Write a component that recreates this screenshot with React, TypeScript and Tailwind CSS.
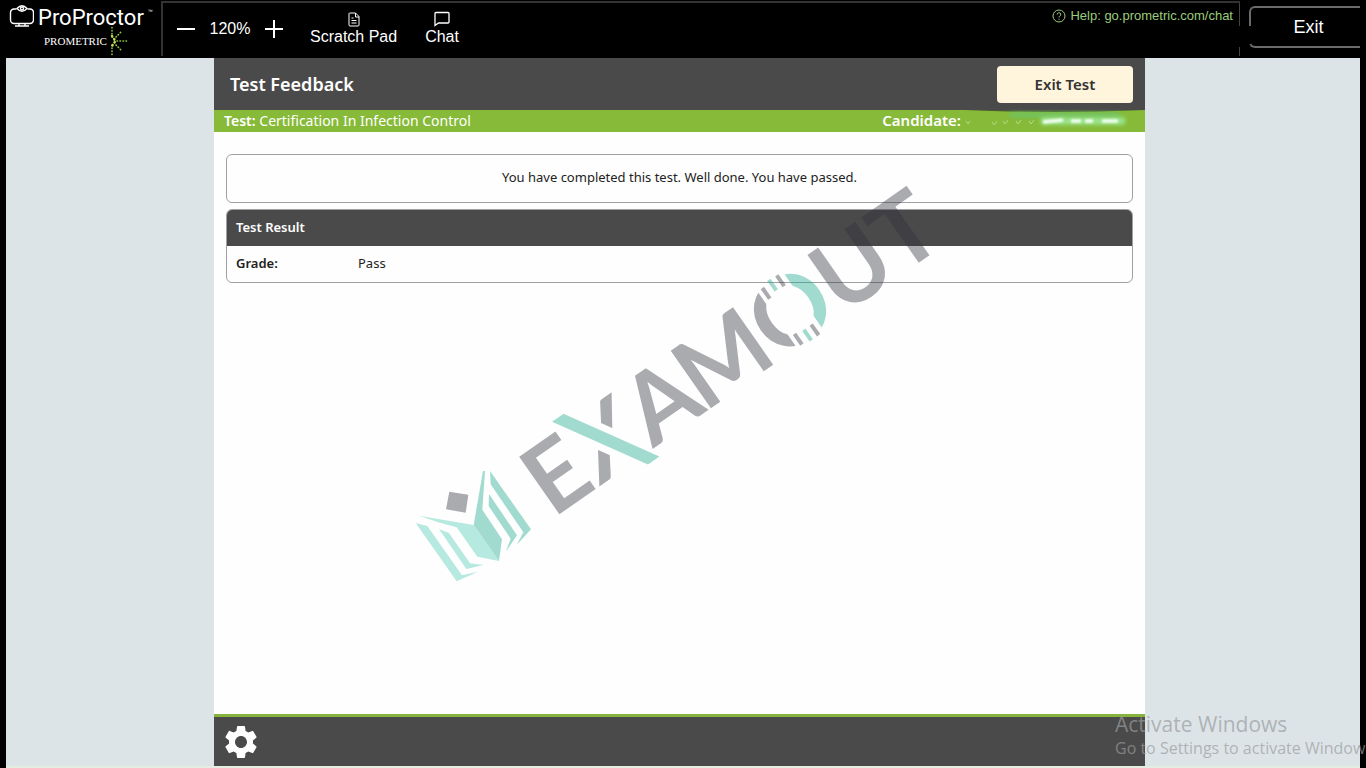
import React from "react";
import { MdSettings } from "react-icons/md";

const SANS = "font-['Noto_Sans','Open_Sans',sans-serif]";

function MonitorLogo() {
  return (
    <svg viewBox="0 0 26 24" className="h-6 w-[26px]" fill="none" stroke="white" strokeWidth="1.4">
      <path d="M8.500 5H6a3.500 3.500 0 0 0-3.500 3.500V16A3.500 3.500 0 0 0 6 19.500h16a3.500 3.500 0 0 0 3.500-3.500V8.500A3.500 3.500 0 0 0 22 5h-2.500" />
      <path d="M9 4.500Q14-1 19 4.500Q14 10 9 4.500z" />
      <circle cx="14" cy="4.500" r="1.500" />
      <path d="M7 22h14M11 19.500v2M17 19.500v2" />
    </svg>
  );
}

function Burst() {
  return (
    <svg viewBox="0 0 20 30" className="h-[30px] w-5" fill="none" stroke="#8ec63f" strokeLinecap="round">
      <g strokeWidth="1.600" strokeDasharray="0.5 2.500">
        <path d="M3 11V1M3 19v10M8 15h10M7 11l5-5M7 19l5 5" />
      </g>
      <g stroke="#c5e04e" strokeWidth="2.400" strokeDasharray="0.5 3.200">
        <path d="M3 10l3.500 5L3 20" />
      </g>
    </svg>
  );
}

function Toolbar() {
  return (
    <header className="flex h-[58px] shrink-0 bg-black pr-1.5 pl-2 font-['Liberation_Sans',Arial,sans-serif] text-white">
      <div className="w-[153px] shrink-0 pt-1">
        <div className="flex items-start gap-1">
          <MonitorLogo />
          <span className="font-['Roboto',sans-serif] text-[22px] leading-7">ProProctor</span>
          <span className="pt-1 text-[5px]">™</span>
        </div>
        <div className="-mt-1 flex h-[26px] items-center gap-0.5 pl-9">
          <span className="font-['Liberation_Serif',serif] text-[11px]">PROMETRIC</span>
          <Burst />
        </div>
      </div>

      <div className="mt-px mb-0.5 flex flex-1 justify-between border-t-2 border-l-2 border-[#333]">
        <div className="flex items-center pb-px pl-[13px]">
          <button aria-label="Zoom out" className="flex size-5 items-center justify-center">
            <svg viewBox="0 0 20 20" className="size-5" stroke="white" strokeWidth="2">
              <path d="M1 10h18" />
            </svg>
          </button>
          <span className="w-[68px] text-center text-base">120%</span>
          <button aria-label="Zoom in" className="flex size-5 items-center justify-center">
            <svg viewBox="0 0 20 20" className="size-5" stroke="white" strokeWidth="2">
              <path d="M1 10h18M10 1v18" />
            </svg>
          </button>
          <button className="ml-[26px] flex flex-col items-center text-base leading-5">
            <svg viewBox="0 0 12 15" className="h-[15px] w-3" fill="none" stroke="white" strokeWidth="1">
              <path d="M1.500 1h6L11 4.500V13a1 1 0 0 1-1 1H2a1 1 0 0 1-1-1V1.500zM7.500 1v4H11M3.500 6h2M3.500 8.500h5M3.500 11h5" />
            </svg>
            Scratch Pad
          </button>
          <button className="ml-7 flex flex-col items-center text-base leading-5">
            <svg viewBox="0 0 16 16" className="size-4" fill="none" stroke="white" strokeWidth="1.300">
              <path d="M2 1.500h12a1 1 0 0 1 1 1v8.500a1 1 0 0 1-1 1H4.500l-3.500 2.500V2.500a1 1 0 0 1 1-1z" />
            </svg>
            Chat
          </button>
        </div>

        <div className="flex flex-col items-end justify-between">
          <div className="flex h-[23px] items-center gap-1 border-r border-[#444] pt-0.5 pr-1.5 text-[#9ccc7c]">
            <svg viewBox="0 0 14 14" className="size-[14px]" fill="none" stroke="currentColor">
              <circle cx="7" cy="7" r="6" />
              <path d="M5.200 5.500a1.800 1.800 0 1 1 2.600 1.600c-.6.300-.8.600-.8 1.400M7 9.700v1" />
            </svg>
            <a href="#help" className="text-[13px]">
              Help: go.prometric.com/chat
            </a>
          </div>
          <span className="h-[9px] border-r border-[#444]" />
        </div>
      </div>

      <button className="relative mt-1.5 ml-[9px] h-[42px] w-[111px] rounded-l-md border-y-2 border-l-2 border-[#6b6b6b] pl-1.5 text-lg">
        <span className="absolute top-[18px] -left-0.5 h-[18px] w-0.5 bg-black" />
        Exit
      </button>
    </header>
  );
}

function Smudge() {
  return (
    <svg viewBox="0 0 180 24" className="h-6 w-[180px]" fill="none" aria-hidden="true">
      <defs>
        <filter id="soft" filterUnits="userSpaceOnUse" x="0" y="-5" width="180" height="34">
          <feGaussianBlur stdDeviation="2" />
        </filter>
        <filter id="softer" filterUnits="userSpaceOnUse" x="0" y="-5" width="180" height="34">
          <feGaussianBlur stdDeviation="0.9" />
        </filter>
      </defs>
      <path d="M0 1Q90 5 180 1z" fill="#4a5a38" />
      <path d="M45 6h110" stroke="#6cc46c" strokeWidth="4" filter="url(#soft)" />
      <path d="M76 12h84" stroke="#9be893" strokeWidth="7" filter="url(#soft)" />
      <path d="M78 13l20-2M106 12h10M120 12h8M137 12h16" stroke="#f4fff5" strokeWidth="3.500" filter="url(#softer)" />
      <path d="M1 12l2 3 2-3M27 13l2 3 3-4M38 12l2 3 3-4M51 12l2 3 3-4M64 12l2 3 3-4" stroke="#b5db84" />
    </svg>
  );
}

function Watermark() {
  return (
    <div className="pointer-events-none absolute inset-0 flex items-center justify-center">
      <svg viewBox="336 84 694 600" className="w-[694px] opacity-40" role="img" aria-label="EXAMOUT">
        <defs>
          <linearGradient id="ring" gradientUnits="userSpaceOnUse" x1="272" y1="0" x2="346" y2="0">
            <stop offset="0.5" stopColor="#2f303c" />
            <stop offset="0.5" stopColor="#19a789" />
          </linearGradient>
          <mask id="ringGap" maskUnits="userSpaceOnUse" x="250" y="-100" width="120" height="130">
            <path d="M250-100h43v130h-43zM325-100h45v130h-45z" fill="white" />
          </mask>
          <mask id="crossGap" maskUnits="userSpaceOnUse" x="40" y="-100" width="90" height="130">
            <path d="M40-100h90v130H40z" fill="white" />
            <path d="M42-80h30l54 90H96z" fill="black" />
          </mask>
        </defs>

        {/* open book */}
        <g transform="translate(400 380) scale(.33333)">
          <path d="M148 335l57 9-8 54-59-10z" fill="#2f303c" />
          <g fill="#4dcab1">
            <path d="M57 407l164 28 76 108-65-13-62-88-48-13z" />
            <path d="M47 429l35 9 104 148 48-11-64 29z" />
            <path d="M117 447l30 12 63 91 41 5-52 12z" />
          </g>
          <g fill="#19a789">
            <path d="M249 272l6 2-8 115 59 89-9 65-76-108z" />
            <path d="M270 273l123 175-43 47 20-38-98-144z" />
            <path d="M267 342l84 124-33 48 14-38-66-98z" />
          </g>
        </g>

        {/* wordmark */}
        <g
          transform="translate(557 516) rotate(-35)"
          className="font-['Lato',sans-serif] text-[97px] font-bold"
          fill="#2f303c"
          textAnchor="middle"
        >
          <text x="23" y="0">E</text>
          <text x="84" y="0" mask="url(#crossGap)">X</text>
          <path d="M50-80h14l54 90h-14z" fill="#19a789" />
          <text x="151" y="0">A</text>
          <text x="226" y="0">M</text>
          <text x="309" y="0" fill="url(#ring)" mask="url(#ringGap)">O</text>
          <path d="M297-69h4v13h-4zM316-71h4v13h-4zM297-13h4v13h-4zM316-11h4v13h-4z" />
          <path d="M307-72h4v13h-4zM307-11h4v13h-4z" fill="#19a789" />
          <text x="384" y="0">U</text>
          <text x="448" y="0">T</text>
        </g>
      </svg>
    </div>
  );
}

export default function App() {
  return (
    <div className={`relative flex h-screen flex-col overflow-hidden bg-black ${SANS}`}>
      <Toolbar />

      <div className="mx-1.5 grid flex-1 grid-cols-[208fr_931fr_215fr] border-b-2 border-[#e3eee0] bg-[#dce4e8]">
        <main className="col-start-2 flex flex-col bg-[#fefefe]">
          <div className="flex h-[52px] items-center justify-between bg-[#4a4a4a] pr-3 pl-4">
            <h1 className="text-lg font-semibold text-white">Test Feedback</h1>
            <button className="h-[37px] w-[136px] rounded bg-[#fff5dc] text-[15px] font-semibold text-[#333]">
              Exit Test
            </button>
          </div>

          <div className="flex h-[22px] items-center justify-between bg-[#86ba38] pl-2.5 text-sm text-white">
            <p>
              <b className="font-semibold">Test:</b> Certification In Infection Control
            </p>
            <p className="flex items-center gap-1">
              <b className="text-[15px] font-semibold">Candidate:</b>
              <Smudge />
            </p>
          </div>

          <section className="flex-1 px-3 pt-[22px]">
            <p className="mb-1.5 flex h-[49px] items-center justify-center rounded-md border border-[#a0a0a4] pb-0.5 text-[13px] text-[#222]">
              You have completed this test. Well done. You have passed.
            </p>
            <div className="overflow-hidden rounded-md border border-[#a0a0a4]">
              <h2 className="flex h-9 items-center bg-[#4a4a4a] px-[9px] text-[13px] font-semibold text-white">
                Test Result
              </h2>
              <table className="w-full text-left text-[13px] text-[#222]">
                <tbody>
                  <tr className="h-9">
                    <th scope="row" className="w-[122px] pl-[9px] font-semibold">
                      Grade:
                    </th>
                    <td className="pl-[9px]">Pass</td>
                  </tr>
                </tbody>
              </table>
            </div>
          </section>

          <footer className="flex h-[52px] items-center border-t-[3px] border-[#86b33c] bg-[#4a4a4a] px-[7px]">
            <button aria-label="Settings" className="text-white">
              <MdSettings className="size-10" />
            </button>
          </footer>
        </main>
      </div>

      <Watermark />

      {/* desktop notice */}
      <div className="pointer-events-none absolute right-1.5 bottom-2.5 w-[245px] font-['Open_Sans',sans-serif] whitespace-nowrap text-[#999c9e]/70">
        <p className="text-[21px] leading-7">Activate Windows</p>
        <p className="text-base leading-5">Go to Settings to activate Window</p>
      </div>
    </div>
  );
}
